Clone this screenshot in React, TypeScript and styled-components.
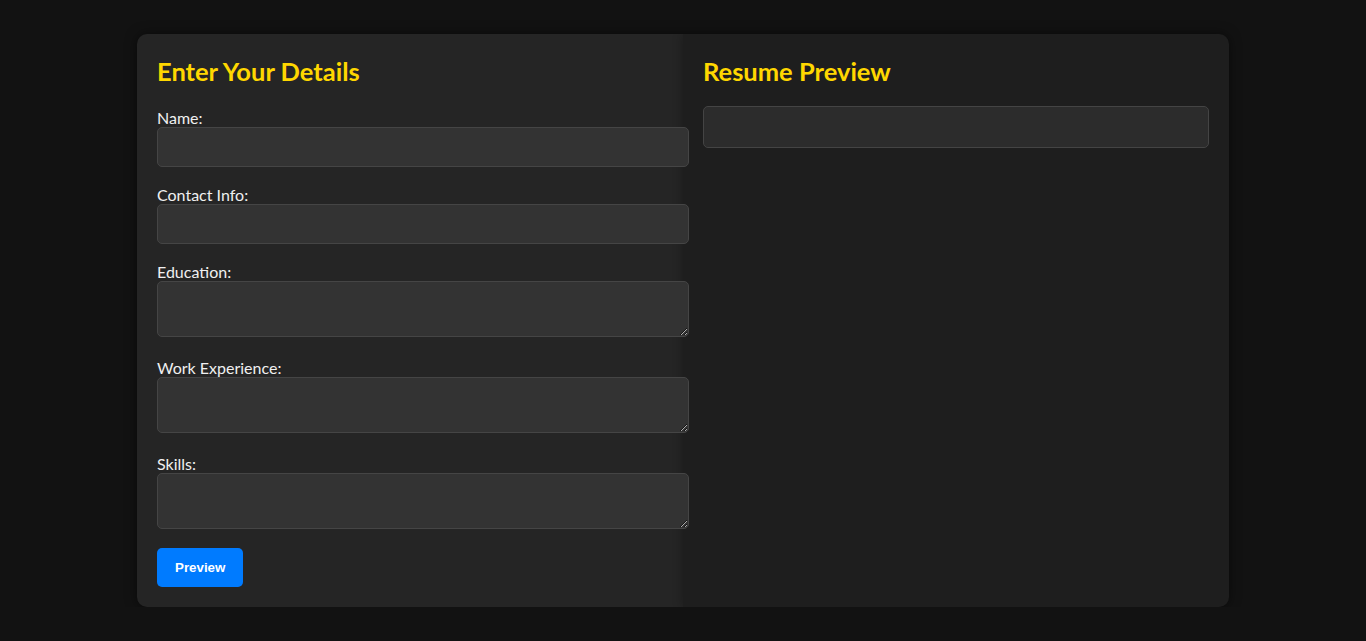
import React from "react";
import styled, { createGlobalStyle } from "styled-components";

const Global = createGlobalStyle`
  html, body { margin: 0; padding: 0; background: #121212; }
  body { font-family: Lato, "Open Sans", sans-serif; color: #e0e0e0; }
  * { box-sizing: border-box; }
`;

const Page = styled.div`
  display: flex;
  justify-content: center;
  padding-top: 34px;
`;

const Container = styled.div`
  width: 1092px;
  display: flex;
  border-radius: 10px;
  overflow: hidden;
  box-shadow: 0 0 12px rgba(0, 0, 0, 0.5);
`;

const Panel = styled.section<{ $tone: string }>`
  flex: 1;
  padding: 23px 20px 20px;
  background: ${(p) => p.$tone};
  box-shadow: 0 0 10px rgba(0, 0, 0, 0.3);
  display: flex;
  flex-direction: column;
  align-items: flex-start;
`;

const Heading = styled.h2<{ $gap: number }>`
  margin: 0 0 ${(p) => p.$gap}px;
  font-size: 25.5px;
  line-height: 29px;
  font-weight: 700;
  color: #ffd700;
`;

const Label = styled.label`
  display: block;
  font-size: 16px;
  line-height: 19px;
  color: #f0f0f0;
`;

const fieldBase = `
  position: relative;
  z-index: 2;
  display: block;
  box-sizing: content-box;
  width: 100%;
  padding: 10px 12px;
  margin: 0;
  background: #333333;
  border: 1px solid #454545;
  border-radius: 5px;
  color: #e0e0e0;
  font-family: inherit;
  font-size: 15px;
`;

const Input = styled.input<{ $gap: number }>`
  ${fieldBase}
  height: 18px;
  margin-bottom: ${(p) => p.$gap}px;
`;

const TextArea = styled.textarea<{ $gap: number }>`
  ${fieldBase}
  height: 34px;
  resize: vertical;
  margin-bottom: ${(p) => p.$gap}px;
`;

const Button = styled.button`
  padding: 12px 18px;
  background: #007bff;
  color: #ffffff;
  border: none;
  border-radius: 5px;
  font-family: "Liberation Sans", Arial, sans-serif;
  font-size: 13.33px;
  font-weight: 700;
  line-height: 15px;
  cursor: pointer;
`;

const PreviewBox = styled.div`
  align-self: stretch;
  padding: 20px;
  background: #2c2c2c;
  border: 1px solid #444444;
  border-radius: 5px;
`;

const Field = styled.div`
  align-self: stretch;
`;

export default function App() {
  return (
    <>
      <Global />
      <Page>
        <Container>
          <Panel $tone="#252525">
            <Heading $gap={22}>Enter Your Details</Heading>
            <Field>
              <Label htmlFor="name">Name:</Label>
              <Input id="name" type="text" $gap={18} />
            </Field>
            <Field>
              <Label htmlFor="contact">Contact Info:</Label>
              <Input id="contact" type="text" $gap={18} />
            </Field>
            <Field>
              <Label htmlFor="education">Education:</Label>
              <TextArea id="education" $gap={21} />
            </Field>
            <Field>
              <Label htmlFor="work">Work Experience:</Label>
              <TextArea id="work" $gap={21} />
            </Field>
            <Field>
              <Label htmlFor="skills">Skills:</Label>
              <TextArea id="skills" $gap={19} />
            </Field>
            <Button>Preview</Button>
          </Panel>
          <Panel $tone="#1e1e1e">
            <Heading $gap={20}>Resume Preview</Heading>
            <PreviewBox />
          </Panel>
        </Container>
      </Page>
    </>
  );
}
